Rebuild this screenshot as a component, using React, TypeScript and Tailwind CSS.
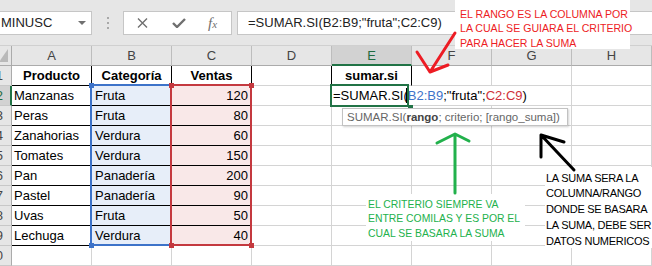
import React from 'react';

const cols = ['A', 'B', 'C', 'D', 'E', 'F', 'G', 'H'];

const data: string[][] = [
  ['Producto', 'Categoría', 'Ventas', '', 'sumar.si'],
  ['Manzanas', 'Fruta', '120'],
  ['Peras', 'Fruta', '80'],
  ['Zanahorias', 'Verdura', '60'],
  ['Tomates', 'Verdura', '150'],
  ['Pan', 'Panadería', '200'],
  ['Pastel', 'Panadería', '90'],
  ['Uvas', 'Fruta', '50'],
  ['Lechuga', 'Verdura', '40'],
  [],
];

function cellClass(r: number, c: number): string {
  const base = 'w-[80px] shrink-0 h-[20px] border-r border-b text-[13px] leading-[19px] whitespace-nowrap overflow-hidden text-black';
  let border = 'border-[#d4d4d4]';
  if (r <= 8 && c <= 2) border = 'border-black';
  else if (r === 0 && (c === 3 || c === 4)) border = 'border-r-black border-b-[#d4d4d4]';
  let bg = 'bg-white';
  if (r >= 1 && r <= 8 && c === 1) bg = 'bg-[#e7eef9]';
  if (r >= 1 && r <= 8 && c === 2) bg = 'bg-[#f9e8e8]';
  let align = 'pl-[2px]';
  if (r === 0) align = 'text-center font-bold';
  else if (c === 1) align = 'pl-[3px]';
  else if (c === 2) align = 'text-right pr-[3px]';
  return `${base} ${border} ${bg} ${align}`;
}

export default function App() {
  return (
    <div className="relative w-[652px] h-[266px] overflow-hidden bg-white font-['Liberation_Sans',Arial,sans-serif]">
      {/* Formula bar */}
      <div className="h-[46px] bg-[#e6e6e6] border-b border-[#d0d0d0] flex items-start pt-[11px]">
        <div className="relative w-[92px] shrink-0 h-[24px] bg-white border border-l-0 border-[#c6c6c6] text-[13px] leading-[22px] text-[#222] pl-[1px]">
          MINUSC
          <svg className="absolute left-[78px] top-[9px]" width="8" height="4" viewBox="0 0 8 4">
            <path d="M0 0H8L4 4Z" fill="#707070" />
          </svg>
        </div>
        <div className="w-[31px] shrink-0 h-[24px] flex flex-col items-center justify-center gap-[3px]">
          <div className="w-[2px] h-[2px] bg-[#a8a8a8]" />
          <div className="w-[2px] h-[2px] bg-[#a8a8a8]" />
          <div className="w-[2px] h-[2px] bg-[#a8a8a8]" />
        </div>
        <div className="w-[109px] shrink-0 h-[24px] bg-white border border-[#c6c6c6] flex items-center">
          <svg className="ml-[13px]" width="11" height="10" viewBox="0 0 11 10">
            <path d="M1 0.5L10 9.5M10 0.5L1 9.5" stroke="#6f6f6f" strokeWidth="1.4" />
          </svg>
          <svg className="ml-[24px]" width="14" height="10" viewBox="0 0 14 10">
            <path d="M1 5L5 9L13 1" stroke="#6f6f6f" strokeWidth="2.4" fill="none" />
          </svg>
          <span className="ml-[22px] font-['Liberation_Serif',serif] italic text-[15px] leading-[20px] text-[#6f6f6f]">
            f<span className="text-[11px]">x</span>
          </span>
        </div>
        <div className="ml-[5px] flex-1 h-[24px] bg-white border border-r-0 border-[#c6c6c6] pl-[10px] text-[13px] leading-[22px] text-[#222] whitespace-nowrap">
          =SUMAR.SI(B2:B9;"fruta";C2:C9)
        </div>
      </div>

      {/* Column headers */}
      <div className="flex h-[20px]">
        <div className="relative w-[12px] shrink-0 h-[20px] bg-[#e6e6e6] border-r border-b border-[#ababab]">
          <svg className="absolute left-0 top-0" width="11" height="19" viewBox="0 0 11 19">
            <path d="M8 3V16H-1Z" fill="#b9b9b9" />
          </svg>
        </div>
        {cols.map((c) => (
          <div
            key={c}
            className={
              c === 'E'
                ? 'w-[80px] shrink-0 h-[20px] bg-[#d2d2d2] border-r border-[#bdbdbd] border-b-2 border-b-[#217346] text-center text-[13px] leading-[19px] text-[#1e6b40]'
                : 'w-[80px] shrink-0 h-[20px] bg-[#e6e6e6] border-r border-[#bdbdbd] border-b border-b-[#ababab] text-center text-[13px] leading-[19px] text-[#444]'
            }
          >
            {c}
          </div>
        ))}
      </div>

      {/* Rows */}
      {data.map((row, r) => (
        <div key={r} className="flex h-[20px]">
          <div
            className={
              r === 1
                ? 'w-[12px] shrink-0 h-[20px] bg-[#d2d2d2] border-r-2 border-r-[#217346] border-b border-b-[#c8c8c8] flex justify-end pr-[7px] overflow-hidden text-[13px] leading-[19px] text-[#1e6b40]'
                : 'w-[12px] shrink-0 h-[20px] bg-[#e6e6e6] border-r border-r-[#ababab] border-b border-b-[#c8c8c8] flex justify-end pr-[8px] overflow-hidden text-[13px] leading-[19px] text-[#444]'
            }
          >
            <span className="whitespace-nowrap">{r + 1}</span>
          </div>
          {cols.map((c, ci) => (
            <div key={c} className={cellClass(r, ci)}>
              {row[ci] ?? ''}
            </div>
          ))}
        </div>
      ))}

      {/* Range highlight B2:B9 */}
      <div className="absolute left-[90px] top-[84px] w-[82px] h-[162px] border-2 border-[#3d73c9]" />
      {/* Range highlight C2:C9 */}
      <div className="absolute left-[170px] top-[84px] w-[82px] h-[162px] border-2 border-[#c4393f]" />
      {/* Handles */}
      <div className="absolute left-[89px] top-[83px] w-[5px] h-[5px] bg-[#3d73c9]" />
      <div className="absolute left-[89px] top-[243px] w-[5px] h-[5px] bg-[#3d73c9]" />
      <div className="absolute left-[169px] top-[83px] w-[5px] h-[5px] bg-[#c4393f]" />
      <div className="absolute left-[169px] top-[243px] w-[5px] h-[5px] bg-[#c4393f]" />
      <div className="absolute left-[249px] top-[83px] w-[5px] h-[5px] bg-[#c4393f]" />
      <div className="absolute left-[249px] top-[243px] w-[5px] h-[5px] bg-[#c4393f]" />

      {/* Editing formula in E2 */}
      <div className="absolute left-[332px] top-[86px] h-[19px] bg-white pl-[1px] pr-[3px] text-[13px] leading-[19px] whitespace-nowrap text-black">
        =SUMAR.SI(<span className="text-[#3d73c9]">B2:B9</span>;"fruta";<span className="text-[#d0303a]">C2:C9</span>)
      </div>
      <div className="absolute left-[330px] top-[84px] w-[79px] h-[23px] border-2 border-[#217346]" />
      <div className="absolute left-[406px] top-[88px] w-[1px] h-[15px] bg-black" />
      <div className="absolute left-[408px] top-[105px] w-[5px] h-[5px] bg-[#217346]" />

      {/* Tooltip */}
      <div className="absolute left-[342px] top-[108px] w-[226px] h-[18px] bg-white border border-[#c2c2c2] shadow-[1px_1px_2px_rgba(0,0,0,0.18)] pl-[4px] text-[11.5px] leading-[16px] text-[#666] whitespace-nowrap">
        SUMAR.SI(<span className="font-bold text-[#444]">rango</span>; criterio; [rango_suma])
      </div>

      {/* Annotation: red */}
      <div className="absolute left-[455px] top-0 w-[175px] h-[49px] bg-white pl-[5px] pt-[7px] text-[10.6px] leading-[14.3px] text-[#ed1c24] whitespace-nowrap">
        <div>EL RANGO ES LA COLUMNA POR</div>
        <div>LA CUAL SE GUIARA EL CRITERIO</div>
        <div>PARA HACER LA SUMA</div>
      </div>

      {/* Annotation: green */}
      <div className="absolute left-[366px] top-[194px] w-[159px] h-[47px] bg-white pl-[2px] pt-[3.5px] text-[10.4px] leading-[14.5px] text-[#22b14c] whitespace-nowrap">
        <div>EL CRITERIO SIEMPRE VA</div>
        <div>ENTRE COMILAS Y ES POR EL</div>
        <div>CUAL SE BASARA LA SUMA</div>
      </div>

      {/* Annotation: black */}
      <div className="absolute left-[545px] top-[167px] w-[107px] h-[81px] bg-white pl-[1px] pt-[3.5px] text-[11px] leading-[15.75px] tracking-[-0.25px] text-black whitespace-nowrap">
        <div>LA SUMA SERA LA</div>
        <div>COLUMNA/RANGO</div>
        <div>DONDE SE BASARA</div>
        <div>LA SUMA, DEBE SER</div>
        <div>DATOS NUMERICOS</div>
      </div>

      {/* Hand-drawn arrows */}
      <svg className="absolute left-0 top-0 pointer-events-none" width="652" height="266" viewBox="0 0 652 266">
        <g fill="none" strokeWidth="3" strokeLinecap="round" strokeLinejoin="round">
          <path d="M455 33L430 72M417 52L430 72L448 65" stroke="#ed1c24" />
          <path d="M455 135L455 193M437 143L455 134L469 141" stroke="#22b14c" />
          <path d="M541 135L574 170M564 142L541 135L541 157" stroke="#000" />
        </g>
      </svg>
    </div>
  );
}
